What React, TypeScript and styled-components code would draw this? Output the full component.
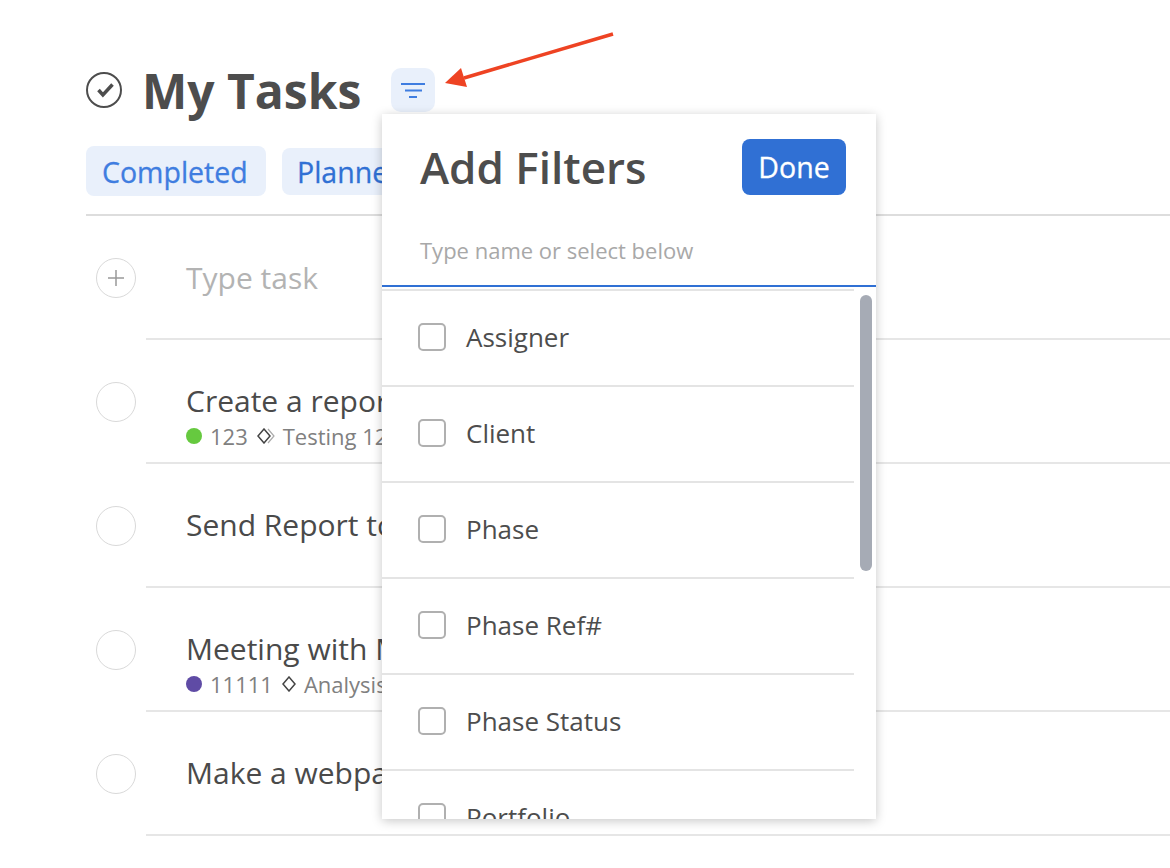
import React from "react";
import styled, { createGlobalStyle } from "styled-components";

const Global = createGlobalStyle`
  html, body { margin: 0; padding: 0; background: #fff; }
  body { font-family: "Open Sans", "Noto Sans", sans-serif; color: #4d4d4d; overflow: hidden; }
  * { box-sizing: border-box; }
`;

const Page = styled.div`
  position: relative;
  width: 1170px;
  height: 868px;
  overflow: hidden;
  padding-left: 86px;
`;
const Header = styled.header`
  height: 146px;
  padding-top: 68px;
  display: flex;
  align-items: flex-start;
`;
const TitleIcon = styled.svg`
  width: 36px;
  height: 36px;
  margin-top: 4px;
  margin-right: 22px;
  flex: none;
`;
const Title = styled.h1`
  margin: -1px 0 0 -2px;
  font-size: 48px;
  line-height: 48px;
  font-weight: 700;
  color: #4d4d4d;
  width: 249px;
  flex: none;
`;
const FilterButton = styled.button`
  width: 44px;
  height: 44px;
  padding: 0;
  border: 0;
  border-radius: 10px;
  background: #e9f0fb;
  display: flex;
  align-items: center;
  justify-content: center;
`;
const Chips = styled.div`
  display: flex;
  align-items: center;
  gap: 16px;
  height: 70px;
  padding-bottom: 18px;
  border-bottom: 2px solid #dddddd;
`;
const Chip = styled.div<{ $h: number; $c: string; $p: number }>`
  width: 180px;
  height: ${(p) => p.$h}px;
  border-radius: 8px;
  background: #e9f0fb;
  color: ${(p) => p.$c};
  font-size: 28.5px;
  font-weight: 500;
  -webkit-text-stroke: 0.3px ${(p) => p.$c};
  line-height: ${(p) => p.$h + 2}px;
  padding-left: ${(p) => p.$p}px;
  white-space: nowrap;
  overflow: hidden;
`;
const AddRow = styled.div`
  height: 124px;
  display: flex;
  padding: 42px 0 0 10px;
`;
const Circle = styled.div`
  width: 40px;
  height: 40px;
  border-radius: 50%;
  border: 1.5px solid #d9d9d9;
  flex: none;
  display: flex;
  align-items: center;
  justify-content: center;
  margin-right: 50px;
  background: #fff;
`;
const Placeholder = styled.div`
  font-size: 30px;
  line-height: 42px;
  margin-top: -1px;
  color: #b3b3b3;
`;
const Row = styled.div`
  height: 124px;
  display: flex;
  margin-left: 10px;
  padding-top: 42px;
  position: relative;
  &::after {
    content: "";
    position: absolute;
    top: -2px;
    left: 50px;
    right: 0;
    height: 2px;
    background: #e6e6e6;
  }
`;
const LastLine = styled.div`
  height: 2px;
  margin-left: 60px;
  background: #e6e6e6;
  margin-top: -2px;
`;
const Body = styled.div`
  white-space: nowrap;
  margin-top: -2px;
`;
const TaskName = styled.div`
  font-size: 30px;
  line-height: 42px;
  color: #4a4a4a;
`;
const Meta = styled.div`
  display: flex;
  align-items: center;
  font-size: 22px;
  line-height: 28px;
  margin-top: 0;
  color: #808080;
`;
const Dot = styled.span<{ $c: string }>`
  width: 16px;
  height: 16px;
  border-radius: 50%;
  background: ${(p) => p.$c};
  margin-right: 8px;
`;
const PhaseIcon = styled.svg`
  margin: 0 8px 0 9px;
  flex: none;
`;
const Popover = styled.div`
  position: absolute;
  left: 382px;
  top: 114px;
  width: 494px;
  height: 705px;
  background: #fff;
  box-shadow: 0 2px 10px rgba(0, 0, 0, 0.22);
  display: flex;
  flex-direction: column;
  overflow: hidden;
`;
const PopHead = styled.div`
  display: flex;
  justify-content: space-between;
  padding: 25px 30px 0 38px;
  height: 113px;
`;
const PopTitle = styled.h2`
  margin: -2px 0 0;
  font-size: 44px;
  line-height: 60px;
  font-weight: 600;
  color: #4d4d4d;
`;
const Done = styled.button`
  width: 104px;
  height: 56px;
  border: 0;
  border-radius: 8px;
  background: #3070d4;
  color: #fff;
  font-family: inherit;
  font-size: 28.5px;
  font-weight: 500;
  -webkit-text-stroke: 0.3px #fff;
  padding: 0;
`;
const Search = styled.div`
  height: 60px;
  padding: 0 38px;
  border-bottom: 2px solid #3070d4;
  font-size: 22px;
  line-height: 47px;
  color: #a8a8a8;
`;
const List = styled.div`
  position: relative;
  flex: 1;
  overflow: hidden;
  padding-top: 2px;
`;
const Item = styled.div`
  width: 472px;
  height: 96px;
  border-top: 2px solid #e4e4e4;
  display: flex;
  align-items: center;
  padding: 0 0 2px 36px;
  font-size: 26px;
  color: #4d4d4d;
  gap: 20px;
`;
const Box = styled.span`
  width: 28px;
  height: 28px;
  border: 2px solid #b0b0b0;
  border-radius: 5px;
  flex: none;
`;
const Thumb = styled.div`
  position: absolute;
  right: 4px;
  top: 8px;
  width: 12px;
  height: 276px;
  border-radius: 6px;
  background: #a6abb5;
`;
const Arrow = styled.svg`
  position: absolute;
  left: 440px;
  top: 28px;
`;

const filters = ["Assigner", "Client", "Phase", "Phase Ref#", "Phase Status", "Portfolio"];

const Diamond = ({ double }: { double?: boolean }) => (
  <PhaseIcon width={double ? 18 : 14} height="16" viewBox={double ? "0 0 18 16" : "0 0 14 16"} fill="none">
    <path d="M7 1 L13 8 L7 15 L1 8 Z" stroke="#444" strokeWidth="1.5" />
    {double && <path d="M11 1 L17 8 L11 15" stroke="#aaa" strokeWidth="1.2" />}
  </PhaseIcon>
);

export default function App() {
  return (
    <Page>
      <Global />
      <Header>
        <TitleIcon viewBox="0 0 36 36" fill="none">
          <circle cx="18" cy="18" r="17" stroke="#4d4d4d" strokeWidth="2" />
          <path d="M12.500 18 L16.900 23 L26.500 12.500" stroke="#4d4d4d" strokeWidth="3.500" />
        </TitleIcon>
        <Title>My Tasks</Title>
        <FilterButton aria-label="Filter">
          <svg width="24" height="18" viewBox="0 0 24 18">
            <path d="M0 3h24M4 9.500h17M8 16h8" stroke="#3f7de0" strokeWidth="2" />
          </svg>
        </FilterButton>
      </Header>
      <Chips>
        <Chip $h={50} $c="#3f7de0" $p={16}>Completed</Chip>
        <Chip $h={47} $c="#3070d4" $p={15}>Planned</Chip>
      </Chips>
      <AddRow>
        <Circle>
          <svg width="18" height="18" viewBox="0 0 18 18">
            <path d="M9 1v16M1 9h16" stroke="#999" strokeWidth="1.5" />
          </svg>
        </Circle>
        <Placeholder>Type task</Placeholder>
      </AddRow>
      <Row>
        <Circle />
        <Body>
          <TaskName>Create a report</TaskName>
          <Meta>
            <Dot $c="#66c93f" />
            123
            <Diamond double />
            Testing 123
          </Meta>
        </Body>
      </Row>
      <Row>
        <Circle />
        <Body>
          <TaskName>Send Report to</TaskName>
        </Body>
      </Row>
      <Row>
        <Circle />
        <Body>
          <TaskName>Meeting with Mark</TaskName>
          <Meta>
            <Dot $c="#5f4ba5" />
            11111
            <Diamond />
            Analysis
          </Meta>
        </Body>
      </Row>
      <Row>
        <Circle />
        <Body>
          <TaskName>Make a webpage</TaskName>
        </Body>
      </Row>
      <LastLine />
      <Popover>
        <PopHead>
          <PopTitle>Add Filters</PopTitle>
          <Done>Done</Done>
        </PopHead>
        <Search>Type name or select below</Search>
        <List>
          {filters.map((f) => (
            <Item key={f}>
              <Box />
              {f}
            </Item>
          ))}
          <Thumb />
        </List>
      </Popover>
      <Arrow width="180" height="65" viewBox="0 0 180 65" fill="none">
        <path d="M173 6 L24 50" stroke="#ee4323" strokeWidth="3.500" />
        <path d="M5 55 L21 40 L27 59 Z" fill="#ee4323" />
      </Arrow>
    </Page>
  );
}
